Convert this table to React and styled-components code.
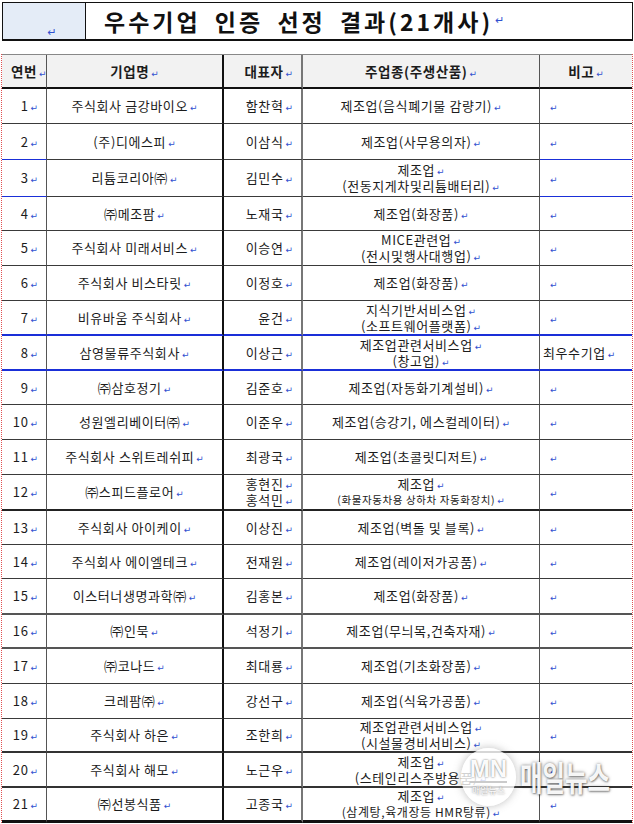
import React from 'react'
import styled, { createGlobalStyle } from 'styled-components'

const GlobalStyle = createGlobalStyle`
  body {
    margin: 0;
    background: #ffffff;
    font-family: "Noto Sans CJK KR", "Noto Sans", sans-serif;
    color: #1c1c1c;
  }
`

const Page = styled.div`
  position: relative;
  width: 634px;
  height: 824px;
  overflow: hidden;
  padding-top: 2px;
  box-sizing: border-box;
`

const TitleBox = styled.div`
  display: grid;
  grid-template-columns: 83px 1fr;
  height: 39px;
  margin-left: 2px;
  width: 631px;
  border: 1px solid #111;
  border-bottom: 2px solid #111;
  box-sizing: border-box;
`

const TitleSide = styled.div`
  background: #e4ecf7;
  border-right: 1px solid #111;
  display: flex;
  align-items: flex-end;
  justify-content: center;
  padding-bottom: 6px;
  padding-left: 14px;
`

const Title = styled.h1`
  margin: 0;
  display: flex;
  align-items: center;
  padding-left: 18px;
  font-size: 23px;
  font-weight: 700;
  letter-spacing: 3px;
  word-spacing: 6px;
  color: #111;
  white-space: nowrap;
`

const Mark = styled.span`
  font-family: "DejaVu Sans", sans-serif;
  font-size: ${p => p.$big ? 11 : 9}px;
  font-weight: 400;
  line-height: 0;
  color: #3050d0;
  margin-left: 2px;
  letter-spacing: 0;
`

const Table = styled.div`
  margin-top: 13px;
  margin-left: 1px;
  width: 632px;
  border-left: 1px dotted #e05050;
  border-right: 1px dotted #e05050;
  box-sizing: border-box;
`

const Row = styled.div`
  display: grid;
  grid-template-columns: 45px 177px 79px 237px 1fr;
  height: ${p => p.$h}px;
  background: ${p => p.$head ? '#f2f2f2' : 'transparent'};
  border-top: ${p => p.$head ? '1px solid #888' : 'none'};
`

const Cell = styled.div`
  display: flex;
  flex-direction: column;
  justify-content: center;
  align-items: ${p => p.$align === 'right' ? 'flex-end' : p.$align === 'left' ? 'flex-start' : 'center'};
  text-align: ${p => p.$align || 'center'};
  padding: 0 ${p => p.$pr || 0}px 0 ${p => p.$pl || 0}px;
  border-right: ${p => p.$divider || 'none'};
  border-bottom: ${p => p.$bottom};
  font-size: ${p => p.$head ? 13.5 : 13}px;
  font-weight: ${p => p.$head ? 700 : 400};
  letter-spacing: 0.6px;
  line-height: 16px;
  white-space: nowrap;
  box-sizing: border-box;
`

const Line = styled.span`
  display: block;
  font-size: ${p => p.$size || 13}px;
  line-height: 16px;
`

const Watermark = styled.div`
  position: absolute;
  left: 461px;
  top: 748px;
  display: flex;
  align-items: center;
  gap: 4px;
  white-space: nowrap;
  pointer-events: none;
`

const Badge = styled.div`
  width: 55px;
  height: 58px;
  border-radius: 50%;
  background: rgba(255, 255, 255, 0.8);
  box-shadow: 0 0 8px rgba(110, 110, 110, 0.45);
  display: flex;
  flex-direction: column;
  align-items: center;
  justify-content: center;
  color: rgba(255, 255, 255, 0.97);
  text-shadow: 0 0 2px rgba(60, 60, 60, 0.8);
`

const BadgeLogo = styled.span`
  font-family: "Liberation Sans", sans-serif;
  font-size: 24px;
  font-weight: 700;
  line-height: 24px;
  border-bottom: 2px solid rgba(200, 200, 200, 0.95);
`

const BadgeName = styled.span`
  font-size: 9px;
  line-height: 12px;
  margin-top: 2px;
`

const BigName = styled.span`
  display: inline-block;
  font-size: 34px;
  line-height: 42px;
  font-weight: 700;
  color: rgba(255, 255, 255, 0.95);
  text-shadow: 0 0 4px rgba(60, 60, 60, 0.7), 1px 1px 2px rgba(0, 0, 0, 0.35);
  transform: scaleX(0.72);
  transform-origin: left center;
`

const rows = [
  { h: 35, name: '주식회사 금강바이오', rep: ['함찬혁'], biz: ['제조업(음식폐기물 감량기)'] },
  { h: 36, name: '(주)디에스피', rep: ['이삼식'], biz: ['제조업(사무용의자)'], edge: '1px solid #1a2fd8' },
  { h: 37, name: '리튬코리아㈜', rep: ['김민수'], biz: ['제조업', '(전동지게차및리튬배터리)'], edge: '1px solid #1a2fd8' },
  { h: 34, name: '㈜메조팜', rep: ['노재국'], biz: ['제조업(화장품)'] },
  { h: 35, name: '주식회사 미래서비스', rep: ['이승연'], biz: ['MICE관련업', '(전시및행사대행업)'] },
  { h: 35, name: '주식회사 비스타릿', rep: ['이정호'], biz: ['제조업(화장품)'] },
  { h: 35, name: '비유바움 주식회사', rep: ['윤건'], biz: ['지식기반서비스업', '(소프트웨어플랫폼)'], all: '2px solid #1a2fd8' },
  { h: 35, name: '삼영물류주식회사', rep: ['이상근'], biz: ['제조업관련서비스업', '(창고업)'], note: '최우수기업', all: '2px solid #1a2fd8' },
  { h: 34, name: '㈜삼호정기', rep: ['김준호'], biz: ['제조업(자동화기계설비)'] },
  { h: 35, name: '성원엘리베이터㈜', rep: ['이준우'], biz: ['제조업(승강기, 에스컬레이터)'] },
  { h: 35, name: '주식회사 스위트레쉬피', rep: ['최광국'], biz: ['제조업(초콜릿디저트)'] },
  { h: 36, name: '㈜스피드플로어', rep: ['홍현진', '홍석민'], biz: ['제조업', '(화물자동차용 상하차 자동화장치)'], small: 10.5, all: '2px solid #222' },
  { h: 34, name: '주식회사 아이케이', rep: ['이상진'], biz: ['제조업(벽돌 및 블록)'] },
  { h: 34, name: '주식회사 에이엘테크', rep: ['전재원'], biz: ['제조업(레이저가공품)'] },
  { h: 36, name: '이스터너생명과학㈜', rep: ['김홍본'], biz: ['제조업(화장품)'], all: '2px solid #555' },
  { h: 34, name: '㈜인묵', rep: ['석정기'], biz: ['제조업(무늬목,건축자재)'], all: '2px solid #555' },
  { h: 35, name: '㈜코나드', rep: ['최대룡'], biz: ['제조업(기초화장품)'] },
  { h: 35, name: '크레팜㈜', rep: ['강선구'], biz: ['제조업(식육가공품)'] },
  { h: 34, name: '주식회사 하은', rep: ['조한희'], biz: ['제조업관련서비스업', '(시설물경비서비스)'], all: '2px solid #333' },
  { h: 35, name: '주식회사 해모', rep: ['노근우'], biz: ['제조업', '(스테인리스주방용품)'], all: '2px solid #333' },
  { h: 35, name: '㈜선봉식품', rep: ['고종국'], biz: ['제조업', '(삼계탕,육개장등 HMR탕류)'], small: 12, all: '3px solid #111' },
]

const dividers = ['1px solid #555', '2px solid #111', '2px solid #777', '1px solid #555', 'none']

const Lines = ({ items, small }) =>
  items.map((t, i) => (
    <Line key={i} $size={i > 0 && small ? small : 13}>
      {t}<Mark>↵</Mark>
    </Line>
  ))

export default function App() {
  return (
    <Page>
      <GlobalStyle />
      <TitleBox>
        <TitleSide><Mark $big>↵</Mark></TitleSide>
        <Title>우수기업 인증 선정 결과(21개사)<Mark $big>↵</Mark></Title>
      </TitleBox>

      <Table>
        <Row $h={34} $head>
          <Cell $head $align="left" $pl={9} $divider={dividers[0]} $bottom="2px solid #111">
            <span>연번<Mark>↵</Mark></span>
          </Cell>
          <Cell $head $divider={dividers[1]} $bottom="2px solid #111">
            <span>기업명<Mark>↵</Mark></span>
          </Cell>
          <Cell $head $align="right" $pr={8} $divider={dividers[2]} $bottom="2px solid #111">
            <span>대표자<Mark>↵</Mark></span>
          </Cell>
          <Cell $head $divider={dividers[3]} $bottom="2px solid #111">
            <span>주업종(주생산품)<Mark>↵</Mark></span>
          </Cell>
          <Cell $head $bottom="2px solid #111">
            <span>비고<Mark>↵</Mark></span>
          </Cell>
        </Row>

        {rows.map((r, i) => {
          const mid = r.all || '1px solid #3a3a3a'
          const edge = r.all || r.edge || mid
          return (
            <Row key={i} $h={r.h}>
              <Cell $align="right" $pr={8} $divider={dividers[0]} $bottom={edge}>
                <span>{i + 1}<Mark>↵</Mark></span>
              </Cell>
              <Cell $divider={dividers[1]} $bottom={mid}>
                <span>{r.name}<Mark>↵</Mark></span>
              </Cell>
              <Cell $align="right" $pr={8} $divider={dividers[2]} $bottom={mid}>
                <Lines items={r.rep} />
              </Cell>
              <Cell $divider={dividers[3]} $bottom={mid}>
                <Lines items={r.biz} small={r.small} />
              </Cell>
              <Cell $align="left" $pl={r.note ? 3 : 8} $bottom={edge}>
                <span>{r.note || ''}<Mark>↵</Mark></span>
              </Cell>
            </Row>
          )
        })}
      </Table>

      <Watermark>
        <Badge>
          <BadgeLogo>MN</BadgeLogo>
          <BadgeName>매일뉴스</BadgeName>
        </Badge>
        <BigName>매일뉴스</BigName>
      </Watermark>
    </Page>
  )
}
